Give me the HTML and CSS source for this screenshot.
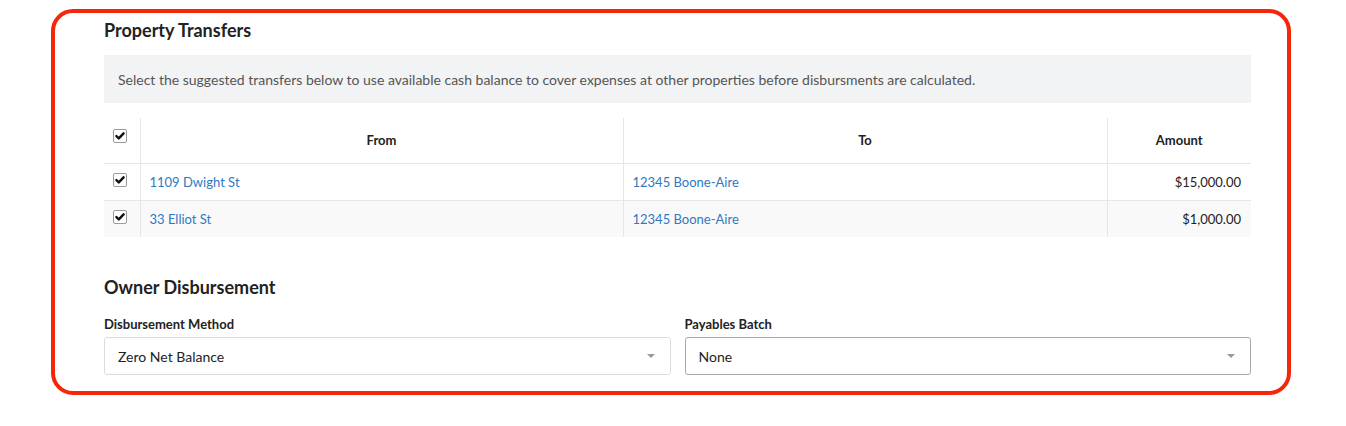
FILE: index.html
```html
<!DOCTYPE html>
<html lang="en">
<head>
    <meta charset="UTF-8">
    <meta name="viewport" content="width=device-width, initial-scale=1.0">
    <title>Owner Disbursement</title>
    <link rel="stylesheet" href="styles.css">
</head>
<body>
    <div class="panel">
        <h2 class="section-title">Property Transfers</h2>
        <div class="notice">
            Select the suggested transfers below to use available cash balance to cover expenses at other properties before disbursments are calculated.
        </div>
        <table class="transfers">
            <colgroup>
                <col class="col-check">
                <col class="col-from">
                <col class="col-to">
                <col class="col-amount">
            </colgroup>
            <thead>
                <tr>
                    <th class="cell-check"><span class="checkbox checked"><svg viewBox="0 0 13 13"><path d="M2.6 6.6 L5.2 9.1 L10.4 3.6"/></svg></span></th>
                    <th>From</th>
                    <th>To</th>
                    <th>Amount</th>
                </tr>
            </thead>
            <tbody>
                <tr>
                    <td class="cell-check"><span class="checkbox checked"><svg viewBox="0 0 13 13"><path d="M2.6 6.6 L5.2 9.1 L10.4 3.6"/></svg></span></td>
                    <td><a href="#">1109 Dwight St</a></td>
                    <td><a href="#">12345 Boone-Aire</a></td>
                    <td class="amount">$15,000.00</td>
                </tr>
                <tr>
                    <td class="cell-check"><span class="checkbox checked"><svg viewBox="0 0 13 13"><path d="M2.6 6.6 L5.2 9.1 L10.4 3.6"/></svg></span></td>
                    <td><a href="#">33 Elliot St</a></td>
                    <td><a href="#">12345 Boone-Aire</a></td>
                    <td class="amount">$1,000.00</td>
                </tr>
            </tbody>
        </table>

        <h2 class="section-title owner-title">Owner Disbursement</h2>
        <div class="fields">
            <div class="field">
                <label>Disbursement Method</label>
                <div class="select">
                    <span>Zero Net Balance</span>
                    <span class="caret"></span>
                </div>
            </div>
            <div class="field">
                <label>Payables Batch</label>
                <div class="select select-active">
                    <span>None</span>
                    <span class="caret"></span>
                </div>
            </div>
        </div>
    </div>
</body>
</html>
```

FILE: styles.css
```css
body {
    margin: 0;
    font-family: 'Lato', 'Open Sans', sans-serif;
    color: #222;
    background: #fff;
}

.panel {
    margin: 9px 0 0 51px;
    width: 1240px;
    height: 386px;
    box-sizing: border-box;
    border: 4px solid #f5260a;
    border-radius: 22px;
    padding: 5px 36px 0 49px;
}

.section-title {
    margin: 0;
    font-size: 18px;
    line-height: 24px;
    font-weight: 700;
    color: #222;
}

.notice {
    margin-top: 13px;
    height: 48px;
    box-sizing: border-box;
    padding: 0 14px;
    display: flex;
    align-items: center;
    background: #f2f3f5;
    font-size: 14px;
    color: #555;
}

/* Transfers table */
.transfers {
    margin-top: 15px;
    width: 100%;
    border-collapse: collapse;
    table-layout: fixed;
    font-size: 13px;
}

.col-check { width: 36px; }
.col-from { width: 483px; }
.col-to { width: 484px; }
.col-amount { width: 144px; }

.transfers thead tr {
    height: 45px;
}

.transfers tbody tr {
    height: 37px;
}

.transfers th {
    padding: 0 10px;
    font-weight: 700;
    text-align: center;
    color: #222;
}

.transfers td {
    padding: 0 9px;
    border-top: 1px solid #e6e6e6;
}

.transfers th + th,
.transfers td + td {
    border-left: 1px solid #e6e6e6;
}

.transfers tbody tr:nth-child(2) {
    background: #f9f9f9;
}

.transfers .cell-check {
    padding: 0 0 0 9px;
    vertical-align: top;
}

.transfers th.cell-check {
    padding-top: 11px;
}

.transfers td.cell-check {
    padding-top: 9px;
}

.transfers a {
    color: #2f78c4;
    text-decoration: none;
}

.transfers .amount {
    text-align: right;
    padding-right: 10px;
}

.checkbox {
    display: block;
    width: 14px;
    height: 14px;
    box-sizing: border-box;
    border: 1px solid #9a9a9a;
    border-radius: 2px;
    background: #fff;
}

.checkbox svg {
    display: block;
    width: 12px;
    height: 12px;
    fill: none;
    stroke: #111;
    stroke-width: 2.6;
    stroke-linecap: round;
    stroke-linejoin: round;
}

/* Disbursement fields */
.owner-title {
    margin-top: 38px;
}

.fields {
    margin-top: 17px;
    display: grid;
    grid-template-columns: 1fr 1fr;
    gap: 14px;
}

.field label {
    display: block;
    font-size: 13px;
    line-height: 16px;
    font-weight: 700;
    color: #222;
}

.select {
    margin-top: 5px;
    height: 38px;
    box-sizing: border-box;
    border: 1px solid #dcdcdc;
    border-radius: 3px;
    padding: 0 15px 0 13px;
    display: flex;
    align-items: center;
    justify-content: space-between;
    font-size: 14px;
    color: #222;
}

.select-active {
    border-color: #a9a9a9;
}

.caret {
    width: 0;
    height: 0;
    border-left: 4px solid transparent;
    border-right: 4px solid transparent;
    border-top: 4px solid #999;
}
```
